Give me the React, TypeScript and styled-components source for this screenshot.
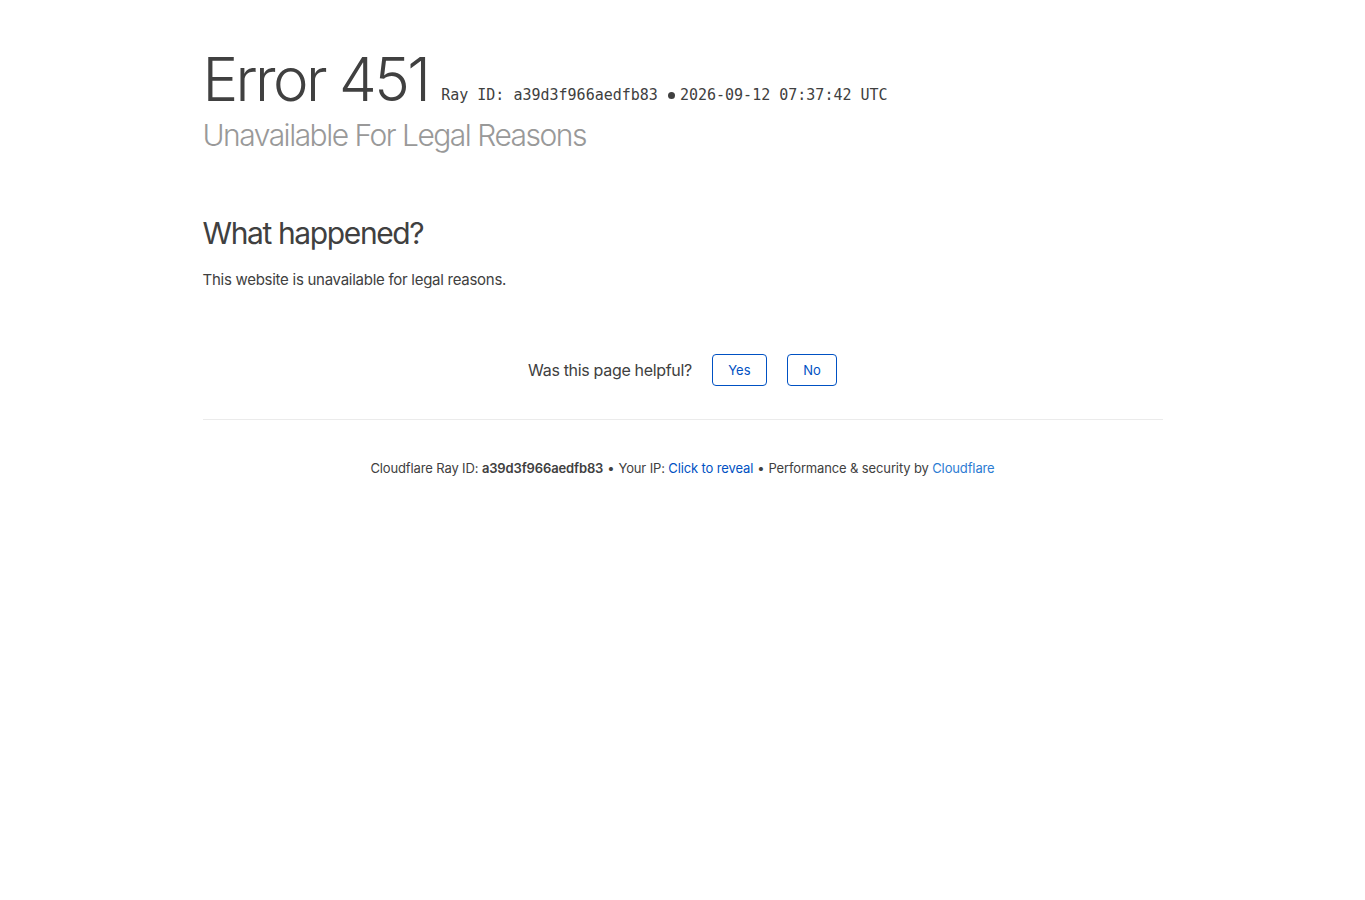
import React from 'react';
import styled, { createGlobalStyle } from 'styled-components';

const GlobalStyle = createGlobalStyle`
  html, body {
    margin: 0;
    padding: 0;
    background: #fff;
  }
  body {
    font-family: Inter, 'Noto Sans', 'Liberation Sans', sans-serif;
    color: #404040;
    -webkit-font-smoothing: antialiased;
  }
`;

const App = () => {
  return (
    <>
      <GlobalStyle />
      <Wrapper>
        <Header>
          <Title>Error 451</Title>
          <RayInfo>
            Ray ID: a39d3f966aedfb83
            <Dot />
            2026-09-12 07:37:42 UTC
          </RayInfo>
        </Header>
        <Subheadline>Unavailable For Legal Reasons</Subheadline>

        <Section>
          <SectionTitle>What happened?</SectionTitle>
          <Text>This website is unavailable for legal reasons.</Text>
        </Section>

        <Feedback>
          <FeedbackLabel>Was this page helpful?</FeedbackLabel>
          <FeedbackButton $width={55}>Yes</FeedbackButton>
          <FeedbackButton $width={50}>No</FeedbackButton>
        </Feedback>

        <Footer>
          <span>
            Cloudflare Ray ID: <strong>a39d3f966aedfb83</strong>
          </span>
          <Sep>•</Sep>
          <span>
            Your IP: <Link>Click to reveal</Link>
          </span>
          <Sep>•</Sep>
          <span>
            Performance &amp; security by <Link $light>Cloudflare</Link>
          </span>
        </Footer>
      </Wrapper>
    </>
  );
};

const Wrapper = styled.div`
  max-width: 960px;
  margin: 0 auto;
  padding-top: 43px;
`;

const Header = styled.div`
  display: flex;
  align-items: baseline;
`;

const Title = styled.h1`
  margin: 0;
  font-size: 60px;
  line-height: 72px;
  font-weight: 300;
  color: #404040;
  letter-spacing: -0.044em;
`;

const RayInfo = styled.span`
  display: inline-flex;
  align-items: center;
  margin-left: 13px;
  font-family: 'DejaVu Sans Mono', 'Liberation Mono', monospace;
  font-size: 15px;
  color: #404040;
  transform: translateY(-1px);
`;

const Dot = styled.span`
  display: inline-block;
  width: 7px;
  height: 7px;
  margin: 0 5px 0 10px;
  border-radius: 50%;
  background: #404040;
`;

const Subheadline = styled.h2`
  margin: 2px 0 0;
  font-size: 30px;
  line-height: 36px;
  font-weight: 300;
  color: #999;
  letter-spacing: -0.05em;
`;

const Section = styled.section`
  margin-top: 62px;
`;

const SectionTitle = styled.h2`
  margin: 0;
  font-size: 30px;
  line-height: 36px;
  font-weight: 400;
  color: #404040;
  letter-spacing: -0.046em;
`;

const Text = styled.p`
  margin: 18px 0 0;
  font-size: 15px;
  line-height: 22px;
  color: #404040;
  letter-spacing: -0.018em;
`;

const Feedback = styled.div`
  display: flex;
  justify-content: center;
  align-items: center;
  gap: 20px;
  margin-top: 63px;
  padding-bottom: 33px;
  border-bottom: 1px solid #ebebeb;
`;

const FeedbackLabel = styled.span`
  font-size: 16px;
  color: #404040;
  letter-spacing: -0.02em;
`;

const FeedbackButton = styled.button<{ $width: number }>`
  width: ${({ $width }) => $width}px;
  height: 32px;
  padding: 0;
  border: 1px solid #0051c3;
  border-radius: 4px;
  background: #fff;
  color: #0051c3;
  font-family: inherit;
  font-size: 13px;
  cursor: pointer;
`;

const Footer = styled.div`
  display: flex;
  justify-content: center;
  align-items: baseline;
  margin-top: 38px;
  font-size: 13px;
  line-height: 20px;
  color: #404040;
  letter-spacing: -0.01em;

  strong {
    font-weight: 600;
  }
`;

const Sep = styled.span`
  margin: 0 4px;
`;

const Link = styled.a<{ $light?: boolean }>`
  color: ${({ $light }) => ($light ? '#2c7cd3' : '#0051c3')};
  text-decoration: none;
  cursor: pointer;
`;

export default App;
